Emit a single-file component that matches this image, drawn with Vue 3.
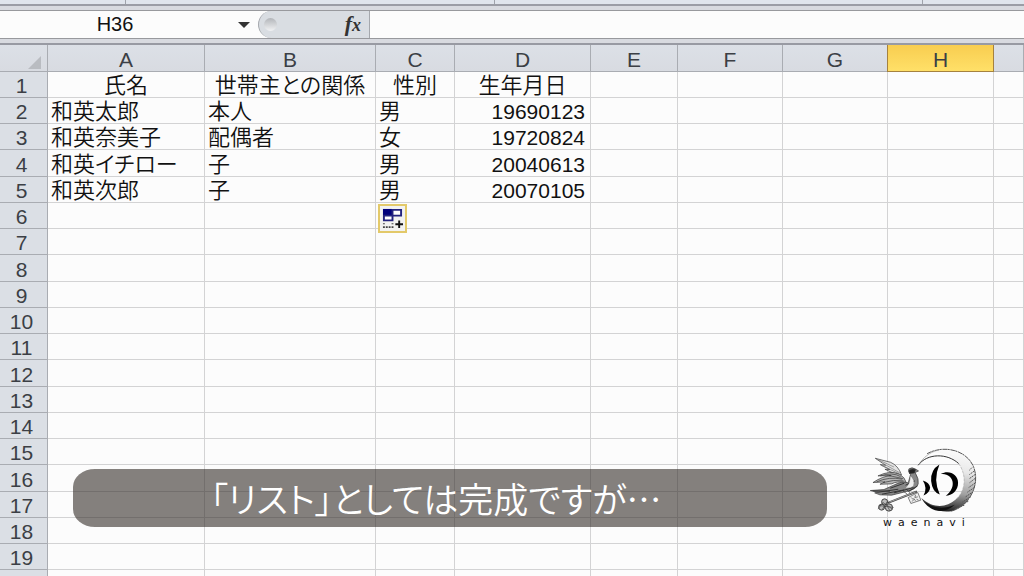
<template>
    <div class="excel">
        <div class="ribbon-edge">
            <span class="group"></span>
            <span class="group"></span>
            <span class="group"></span>
            <span class="group"></span>
        </div>
        <div class="formula-bar">
            <input class="name-box" type="text" aria-label="Name box" v-model="selected">
            <button class="name-toggle" type="button" aria-label="Open name list">
                <svg width="12" height="6" viewBox="0 0 12 6"><path d="M0 0h12L6 6z" fill="#333" /></svg>
            </button>
            <div class="fx-area">
                <span class="knob"></span>
                <button class="fx" type="button" aria-label="Insert function"><i>f</i><i class="sub">x</i></button>
            </div>
            <input class="formula" type="text" aria-label="Formula" v-model="formula">
        </div>
        <main class="sheet">
            <table>
                <colgroup>
                    <col class="col-num">
                    <col v-for="c in columns" :key="c" :class="'col-' + c.toLowerCase()">
                </colgroup>
                <thead>
                    <tr>
                        <th class="corner">
                            <button type="button" aria-label="Select all">
                                <svg width="13" height="13" viewBox="0 0 13 13"><path d="M13 0v13H0z" fill="#b9bcc1" /></svg>
                            </button>
                        </th>
                        <th v-for="c in columns" :key="c" scope="col" :class="{ active: c === activeColumn }">{{ c === 'I' ? '' : c }}</th>
                    </tr>
                </thead>
                <tbody>
                    <tr v-for="n in 20" :key="n">
                        <th scope="row">{{ n < 20 ? n : '' }}</th>
                        <td v-for="(c, i) in columns" :key="c" :class="{ title: n === 1, number: n > 1 && c === 'D' }">{{ rows[n - 1]?.[i] }}<button v-if="n === 6 && c === 'C'" class="autofill" type="button" aria-label="Auto fill options">
                                <svg width="21" height="21" viewBox="0 0 22 22">
                                    <path d="M1 1h10v7H1z" fill="#00007b" />
                                    <path d="M11 2h9v6h-9zM2 8h9v5H2z" fill="#fff" stroke="#23237e" stroke-width="2" />
                                    <path d="M1 16h2v1H1zM1 19h2v2H1zM4 19h2v2H4zM7 19h2v2H7zM10 19h2v2h-2zM10 16h2v1h-2z" fill="#444" />
                                    <path d="M14 17h8M18 13v8" stroke="#111" stroke-width="2" />
                                </svg>
                            </button></td>
                    </tr>
                </tbody>
            </table>
        </main>
        <p class="caption">「リスト」としては完成ですが…</p>
        <figure class="logo">
            <svg viewBox="50 50 340 204" aria-hidden="true">
                <defs>
                    <linearGradient id="moon" x1="0.600" y1="0" x2="0.500" y2="1">
                        <stop offset="0" stop-color="#fcfcfc" />
                        <stop offset="0.350" stop-color="#e8e8e8" />
                        <stop offset="0.700" stop-color="#a0a0a0" />
                        <stop offset="1" stop-color="#222" />
                    </linearGradient>
                </defs>
                <!-- moon -->
                <path d="M231 70C280 43 348 58 370 108C393 163 357 229 304 243C272 249 236 235 215 205C250 236 290 232 316 209C348 182 350 137 326 100C307 72 267 61 231 70z" fill="url(#moon)" />
                <path d="M231 70C280 43 348 58 370 108C393 163 357 229 304 243" fill="none" stroke="#555" stroke-width="3" stroke-dasharray="14 1 7 2" />
                <path d="M204 105C231 68 292 68 326 100" fill="none" stroke="#333" stroke-width="3" />
                <path d="M326 100C350 133 349 182 316 209" fill="none" stroke="#aaa" stroke-width="2" stroke-dasharray="9 3" />
                <path d="M207 101C217 84 241 63 267 59" fill="none" stroke="#999" stroke-width="2" />
                <path d="M213 203C239 235 277 240 314 224C283 252 239 250 213 203z" fill="#111" />
                <path d="M366 112l-8 8m14 3l-14 10m17 0l-18 13m19-2l-18 14m18 0l-20 14m17 0l-21 14m17-1l-24 16m18-2l-26 17m18-3l-27 16m15-4l-29 11" stroke="#555" stroke-width="3" stroke-dasharray="5 2" />
                <!-- brush strokes -->
                <path d="M218 151Q238 157 240 172Q239 188 220 196Q233 174 218 151z" />
                <path d="M268 103Q241 119 243 152Q246 184 269 193Q248 149 268 103z" />
                <path d="M272 131C298 118 324 133 324 157C325 182 305 196 287 197C303 183 311 169 307 152C303 136 288 131 272 131z" />
                <!-- wings -->
                <g stroke="#333" stroke-width="2" stroke-linejoin="round">
                    <path d="M75 84L121 96Q144 106 154 134Q127 131 104 117L119 118L90 103L106 105z" fill="#e2e2e2" />
                    <path d="M83 88l48 22m-30-9l48 27m-56-23l53 25m-30-6l26 8" fill="none" stroke="#777" />
                    <path d="M68 157Q98 137 123 136L83 137Q119 119 148 132Q164 141 168 157Q139 152 124 161L89 162L104 155z" fill="#b5b5b5" />
                    <path d="M79 155q38-17 77-8M90 137q37-12 61 2M99 157q31-10 61-5M116 136l42 9" fill="none" />
                    <path d="M60 181L101 178L130 165Q157 151 174 158L181 133Q173 124 176 116Q185 109 197 117L205 122L195 127Q207 147 204 161Q199 178 168 184L124 195L89 194L73 188L84 186z" fill="#888" />
                    <path d="M67 182l52 1m-35 3l60-9m-49 15l67-13m-42-5l42-15m-31 29l59-16m-24-7l28-13m-18 31l26-16" fill="none" stroke-width="3" />
                    <path d="M181 137q14 14 8 30q-12 8-22 5q14-11 14-35z" fill="#eee" stroke="none" />
                    <path d="M176 121q9-8 20-3l-3 10-15 2z" fill="#222" />
                    <path d="M158 182l12 9m0-12l10 9" fill="none" />
                </g>
                <!-- key -->
                <g fill="none" stroke="#444">
                    <path d="M113 218L200 184" stroke-width="6" />
                    <path d="M117 216L197 185" stroke="#ccc" stroke-width="2" />
                    <path d="M174 202l29-15 9 23-30 10z" fill="#eee" stroke-width="2" />
                    <path d="M183 202l7 7-4 5m10-20l-2 8 9-2m-4 7l6 3m-15-6l6 8" stroke-width="2" />
                    <g fill="#bbb">
                        <circle cx="103" cy="215" r="9" stroke-width="3" />
                        <circle cx="94" cy="231" r="9" stroke-width="3" />
                        <circle cx="116" cy="232" r="11" stroke-width="3" />
                    </g>
                    <path d="M83 237l15-20 29 20M96 238l17-27M108 222l11 20M86 226l44 6" stroke-width="2" />
                </g>
            </svg>
            <figcaption>waenavi</figcaption>
        </figure>
    </div>
</template>
<script setup>
import { ref } from 'vue';
const selected = ref('H36');
const formula = ref('');
const activeColumn = 'H';
const columns = ['A', 'B', 'C', 'D', 'E', 'F', 'G', 'H', 'I'];
const rows = [
    ['氏名', '世帯主との関係', '性別', '生年月日'],
    ['和英太郎', '本人', '男', '19690123'],
    ['和英奈美子', '配偶者', '女', '19720824'],
    ['和英イチロー', '子', '男', '20040613'],
    ['和英次郎', '子', '男', '20070105'],
];
</script>
<style>
body {
    margin: 0;
}
</style>
<style scoped>
.excel {
    position: relative;
    display: flex;
    flex-direction: column;
    height: 100vh;
    overflow: hidden;
    background: #fcfcfc;
    color: #111;
    font-family: "Liberation Sans", "Noto Sans CJK JP", sans-serif;
    font-feature-settings: "palt";
}
button, input {
    box-sizing: border-box;
    margin: 0;
    padding: 0;
    border: 0;
    background: none;
    color: inherit;
    font: inherit;
}
svg {
    display: block;
}
.ribbon-edge {
    display: grid;
    grid-template-columns: 125px 369px 1fr 102px;
    height: 4px;
    background: #e0e5ed;
    border-bottom: 2px solid #9b9da6;
}
.group + .group {
    border-left: 1px solid #9fa3ab;
}
.formula-bar {
    display: flex;
    height: 27px;
    margin-top: 4px;
    border-top: 1px solid #98999d;
    border-bottom: 1px solid #98999d;
    background: #fcfcfc;
    outline: 4px solid #d8dae0;
    z-index: 0;
}
.name-box {
    width: 230px;
    text-align: center;
    font-size: 20px;
}
.name-toggle {
    display: flex;
    align-items: center;
    justify-content: center;
    width: 28px;
}
.fx-area {
    display: flex;
    align-items: center;
    justify-content: space-between;
    box-sizing: border-box;
    width: 112px;
    padding: 0 8px 0 5px;
    border: 1px solid #a5a8ad;
    border-width: 0 1px;
    border-radius: 14px 0 0 14px;
    background: #d9dde2;
}
.knob {
    width: 13px;
    height: 13px;
    border-radius: 50%;
    background: linear-gradient(#b2b5b9, #f1f2f4);
}
.fx {
    color: #333;
    font: bold 22px/24px "Liberation Serif", serif;
}
.sub {
    font-size: 18px;
}
.formula {
    flex: 1;
    min-width: 0;
    padding: 0 6px;
    font-size: 20px;
}
.sheet {
    flex: 1;
    min-height: 0;
    margin-top: 4px;
    border-top: 2px solid #989aa3;
    background: #fcfcfc;
    overflow: hidden;
    z-index: 1;
}
table {
    width: 100%;
    table-layout: fixed;
    border-collapse: separate;
    border-spacing: 0;
}
.col-num { width: 48px; }
.col-a { width: 157px; }
.col-b { width: 171px; }
.col-c { width: 79px; }
.col-d { width: 136px; }
.col-e { width: 87px; }
.col-f, .col-g { width: 105px; }
.col-h { width: 106px; }
th, td {
    box-sizing: border-box;
    height: 26px;
    padding: 2px 5px 0 3px;
    border-right: 1px solid #d3d3d4;
    border-bottom: 1px solid #d3d3d4;
    font-size: 21px;
    font-weight: normal;
    line-height: 23px;
    text-align: left;
    white-space: nowrap;
}
th {
    border-color: #a9acb2;
    background: #dbdfe5;
    color: #3c3f45;
    text-align: center;
}
td {
    position: relative;
    font-size: 22px;
    font-weight: 350;
}
thead th {
    height: 27px;
    padding: 3px 4px 0;
    background: linear-gradient(#dce0e7, #d8dbe1);
}
tbody th {
    padding: 2px 8px 0 4px;
}
tbody tr:nth-child(4n) > * {
    height: 27px;
}
.active {
    border-color: #a5823f;
    background: linear-gradient(#f8cd50, #ffe068);
    box-shadow: -1px 0 #a5823f;
}
.corner button {
    display: flex;
    align-items: flex-end;
    justify-content: flex-end;
    width: 100%;
    height: 18px;
}
thead .corner {
    padding-right: 6px;
}
.title {
    padding: 2px 4px 0;
    text-align: center;
}
.number {
    font-size: 21px;
    text-align: right;
}
.autofill {
    position: absolute;
    top: 1px;
    left: 2px;
    padding: 2px;
    border: 2px solid #e3c969;
    background: #f2f2f1;
    z-index: 1;
}
.caption {
    position: absolute;
    right: 197px;
    bottom: 49px;
    left: 73px;
    margin: 0;
    padding-right: 28px;
    border-radius: 22px / 18px;
    background: rgba(52, 45, 40, 0.6);
    color: #fff;
    font-family: "Noto Sans CJK JP", sans-serif;
    font-size: 35px;
    font-weight: 350;
    line-height: 58px;
    text-align: center;
    z-index: 2;
}
.logo {
    position: absolute;
    right: 44px;
    bottom: 45px;
    width: 113px;
    margin: 0;
    z-index: 2;
}
.logo figcaption {
    padding-left: 16px;
    font: 11px/16px "DejaVu Sans", sans-serif;
    letter-spacing: 6px;
}
</style>
